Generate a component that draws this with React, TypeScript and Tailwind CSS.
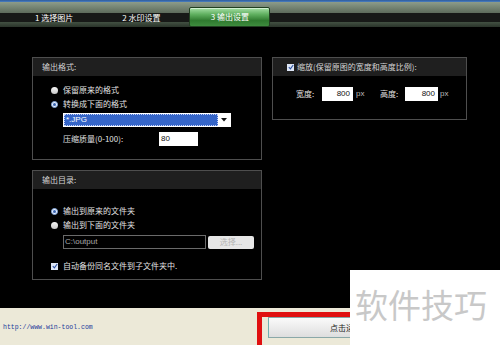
import React from 'react';

const cjk = { fontFamily: '"Noto Sans CJK SC", "Noto Sans", sans-serif' };
const latin = { fontFamily: '"Liberation Sans", sans-serif' };

function Radio({ checked }: { checked?: boolean }) {
  if (checked) {
    return (
      <span className="flex h-[7px] w-[7px] items-center justify-center rounded-full border border-[#7fa4d8] bg-[#e8f0ff]">
        <span className="h-[3px] w-[3px] rounded-full bg-[#3a64b0]" />
      </span>
    );
  }
  return <span className="h-[7px] w-[7px] rounded-full bg-[linear-gradient(to_bottom,#f4f4f4,#c8c8c8)]" />;
}

function Check() {
  return (
    <span className="flex h-[7px] w-[7px] items-center justify-center bg-[#dde6f6]">
      <svg width="6" height="6" viewBox="0 0 6 6">
        <path d="M0.8 3.2 L2.4 4.8 L5.2 1" fill="none" stroke="#2c50a0" strokeWidth="1.1" />
      </svg>
    </span>
  );
}

function Panel({ title, children, className }: { title: React.ReactNode; children: React.ReactNode; className: string }) {
  return (
    <div className={`border border-[#4e4e4e] ${className}`}>
      <div className="flex h-[18px] items-center bg-[#1f1f1f] pl-[9px] text-[8px] text-[#d4d4d4]">{title}</div>
      {children}
    </div>
  );
}

export default function App() {
  return (
    <div className="relative h-[345px] w-[500px] overflow-hidden bg-black text-[8px]" style={cjk}>
      {/* tab bar */}
      <div className="flex h-[27px] items-start bg-[linear-gradient(to_bottom,#2c5a9c_0px,#4a7fc0_2px,#8c9c8a_2px,#5d6b5b_13px,#171917_13px,#171917_22px,#425042_22px,#2a342a_27px)] text-white">
        <span className="ml-[35px] mt-[12px]">1 选择图片</span>
        <span className="ml-[49px] mt-[12px]">2 水印设置</span>
        <div className="ml-[29px] mt-[7px] flex h-[20px] w-[81px] items-center justify-center rounded-[2px] border border-[#213f21] bg-[linear-gradient(to_bottom,#a6e0a6_0%,#60b060_35%,#2f7a2f_70%,#3e8c3e_100%)] shadow-[inset_0_1px_0_#d0f0d0]">
          3 输出设置
        </div>
      </div>

      {/* main */}
      <div className="flex h-[281px] gap-[10px] pl-[32px] pt-[30px] text-[#e2e2e2]">
        <div className="flex flex-col gap-[10px]">
          <Panel title="输出格式:" className="h-[103px] w-[230px]">
            <div className="flex flex-col pl-[18px] pt-[7px]">
              <div className="flex h-[14px] items-center gap-[5px]">
                <Radio />
                <span>保留原来的格式</span>
              </div>
              <div className="flex h-[14px] items-center gap-[5px]">
                <Radio checked />
                <span>转换成下面的格式</span>
              </div>
              <div className="ml-[12px] mt-[2px] flex h-[14px] w-[168px] border border-white bg-white">
                <div className="flex flex-1 items-center border border-dotted border-[#c0d0ff] bg-[#3565c8] pl-[1px] text-white" style={latin}>
                  *.JPG
                </div>
                <div className="flex w-[12px] items-center justify-center">
                  <svg width="6" height="4" viewBox="0 0 6 4">
                    <path d="M0 0 H6 L3 3.5 Z" fill="#111" />
                  </svg>
                </div>
              </div>
              <div className="mt-[5px] flex h-[14px] items-center pl-[12px]">
                <span className="w-[96px]">压缩质量(0-100):</span>
                <div className="flex h-[14px] w-[39px] items-center bg-white pl-[2px] text-[#111]" style={latin}>
                  80
                </div>
              </div>
            </div>
          </Panel>

          <Panel title="输出目录:" className="h-[110px] w-[230px]">
            <div className="flex flex-col pl-[18px] pt-[15px]">
              <div className="flex h-[14px] items-center gap-[5px]">
                <Radio checked />
                <span>输出到原来的文件夹</span>
              </div>
              <div className="flex h-[14px] items-center gap-[5px]">
                <Radio />
                <span>输出到下面的文件夹</span>
              </div>
              <div className="ml-[12px] mt-[3px] flex h-[14px] items-center gap-[2px]">
                <div className="flex h-[14px] w-[143px] items-center border border-[#6a6a6a] pl-[1px] text-[#a8a8a8]" style={latin}>
                  C:\output
                </div>
                <div className="flex h-[13px] w-[46px] items-center justify-center rounded-[2px] bg-[#e6e6e6] text-[#b4b4b4]">
                  选择...
                </div>
              </div>
              <div className="mt-[10px] flex h-[14px] items-center gap-[5px]">
                <Check />
                <span>自动备份同名文件到子文件夹中.</span>
              </div>
            </div>
          </Panel>
        </div>

        <Panel
          title={
            <span className="flex items-center gap-[3px] pl-[5px]">
              <Check />
              <span>缩放(保留原图的宽度和高度比例):</span>
            </span>
          }
          className="h-[63px] w-[195px]"
        >
          <div className="flex items-center pl-[23px] pt-[11px]">
            <span className="w-[26px]">宽度:</span>
            <div className="flex h-[14px] w-[31px] items-center justify-end bg-white pr-[3px] text-[#111]" style={latin}>
              800
            </div>
            <span className="ml-[3px] w-[24px] text-[#bbb]" style={latin}>px</span>
            <span className="w-[25px]">高度:</span>
            <div className="flex h-[14px] w-[33px] items-center justify-end bg-white pr-[3px] text-[#111]" style={latin}>
              800
            </div>
            <span className="ml-[2px] text-[#bbb]" style={latin}>px</span>
          </div>
        </Panel>
      </div>

      {/* footer */}
      <div className="flex h-[37px] bg-[#ece9d8]">
        <div className="flex w-[257px] items-center pl-[3px] pt-[2px]">
          <span className="text-[6.5px] text-[#1a3a9a]" style={{ fontFamily: '"Liberation Mono", monospace' }}>
            http://www.win-tool.com
          </span>
        </div>
        <div className="mt-[4px] h-[40px] w-[93px] shrink-0 border-[5px] border-r-0 border-[#e01010] pl-[6px]">
          <div className="flex h-[21px] items-center overflow-hidden whitespace-nowrap border border-r-0 border-[#8aa8a8] border-l-[#6fb0b0] bg-[linear-gradient(to_bottom,#fafafa,#dedede)] pl-[61px] text-[#222]">
            点击运行
          </div>
        </div>
      </div>

      {/* watermark */}
      <div className="absolute left-[350px] top-[270px] h-[75px] w-[150px] bg-white pl-[5px] pt-[18px]">
        <span className="text-[33px] leading-none text-[#c8c8c8]">软件技巧</span>
      </div>
    </div>
  );
}
